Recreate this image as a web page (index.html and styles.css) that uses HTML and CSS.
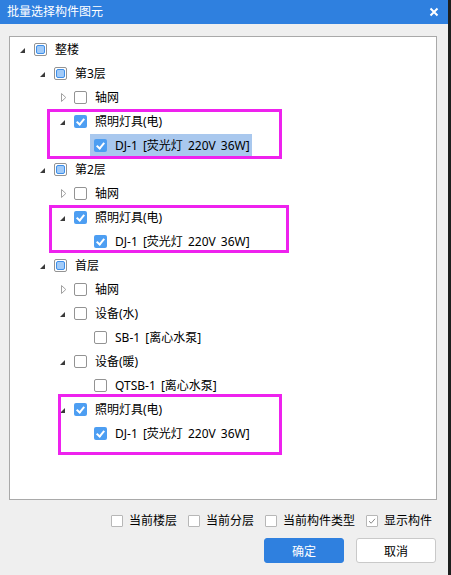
FILE: index.html
```html
<!DOCTYPE html>
<html lang="zh-CN">
<head>
<meta charset="utf-8">
<title>批量选择构件图元</title>
<link rel="stylesheet" href="styles.css">
</head>
<body>
<div class="dialog">
  <div class="titlebar">
    <span class="title">批量选择构件图元</span>
    <svg class="close" width="10" height="10" viewBox="0 0 10 10"><path d="M1.5 1.5 L8.5 8.5 M8.5 1.5 L1.5 8.5" stroke="#fff" stroke-width="2" fill="none"/></svg>
  </div>
  <div class="panel">
    <div class="row l0"><span class="tw"><i class="exp"></i></span><span class="item"><span class="cb part"></span><span class="lbl">整楼</span></span></div>
    <div class="row l1"><span class="tw"><i class="exp"></i></span><span class="item"><span class="cb part"></span><span class="lbl">第3层</span></span></div>
    <div class="row l2"><span class="tw col"><svg width="6" height="9" viewBox="0 0 6 9"><polygon points="0.5,0.5 4.8,4.5 0.5,8.5" fill="none" stroke="#a0a0a0"/></svg></span><span class="item"><span class="cb"></span><span class="lbl">轴网</span></span></div>
    <div class="row l2"><span class="tw"><i class="exp"></i></span><span class="item"><span class="cb chk"></span><span class="lbl">照明灯具(电)</span></span></div>
    <div class="row l3"><span class="tw"></span><span class="item sel"><span class="cb chk"></span><span class="lbl">DJ-1 [荧光灯 220V 36W]</span></span></div>
    <div class="row l1"><span class="tw"><i class="exp"></i></span><span class="item"><span class="cb part"></span><span class="lbl">第2层</span></span></div>
    <div class="row l2"><span class="tw col"><svg width="6" height="9" viewBox="0 0 6 9"><polygon points="0.5,0.5 4.8,4.5 0.5,8.5" fill="none" stroke="#a0a0a0"/></svg></span><span class="item"><span class="cb"></span><span class="lbl">轴网</span></span></div>
    <div class="row l2"><span class="tw"><i class="exp"></i></span><span class="item"><span class="cb chk"></span><span class="lbl">照明灯具(电)</span></span></div>
    <div class="row l3"><span class="tw"></span><span class="item"><span class="cb chk"></span><span class="lbl">DJ-1 [荧光灯 220V 36W]</span></span></div>
    <div class="row l1"><span class="tw"><i class="exp"></i></span><span class="item"><span class="cb part"></span><span class="lbl">首层</span></span></div>
    <div class="row l2"><span class="tw col"><svg width="6" height="9" viewBox="0 0 6 9"><polygon points="0.5,0.5 4.8,4.5 0.5,8.5" fill="none" stroke="#a0a0a0"/></svg></span><span class="item"><span class="cb"></span><span class="lbl">轴网</span></span></div>
    <div class="row l2"><span class="tw"><i class="exp"></i></span><span class="item"><span class="cb"></span><span class="lbl">设备(水)</span></span></div>
    <div class="row l3"><span class="tw"></span><span class="item"><span class="cb"></span><span class="lbl">SB-1 [离心水泵]</span></span></div>
    <div class="row l2"><span class="tw"><i class="exp"></i></span><span class="item"><span class="cb"></span><span class="lbl">设备(暖)</span></span></div>
    <div class="row l3"><span class="tw"></span><span class="item"><span class="cb"></span><span class="lbl">QTSB-1 [离心水泵]</span></span></div>
    <div class="row l2"><span class="tw"><i class="exp"></i></span><span class="item"><span class="cb chk"></span><span class="lbl">照明灯具(电)</span></span></div>
    <div class="row l3"><span class="tw"></span><span class="item"><span class="cb chk"></span><span class="lbl">DJ-1 [荧光灯 220V 36W]</span></span></div>

    <div class="mark m1"></div>
    <div class="mark m2"></div>
    <div class="mark m3"></div>
  </div>
  <div class="options">
    <label class="opt"><span class="ocb"></span>当前楼层</label>
    <label class="opt"><span class="ocb"></span>当前分层</label>
    <label class="opt"><span class="ocb"></span>当前构件类型</label>
    <label class="opt"><span class="ocb on"><svg width="10" height="10" viewBox="0 0 10 10"><path d="M2 5.2 L4.2 7.2 L8 2.8" stroke="#8a8a8a" stroke-width="1" fill="none"/></svg></span>显示构件</label>
  </div>
  <div class="buttons">
    <button class="btn primary">确定</button>
    <button class="btn">取消</button>
  </div>
</div>
</body>
</html>
```
FILE: styles.css
```css
html, body {
  margin: 0;
  padding: 0;
  background: #1d1f1e;
}
body {
  width: 451px;
  height: 575px;
  overflow: hidden;
  font-family: "Noto Sans", "Noto Sans CJK SC", sans-serif;
  font-size: 12px;
  color: #000;
}
.dialog {
  width: 448px;
  height: 575px;
  background: #efefef;
  display: flex;
  flex-direction: column;
}
.titlebar {
  height: 24px;
  background: #2f80df;
  display: flex;
  align-items: center;
  justify-content: space-between;
  padding: 0 9px 0 7px;
  flex: none;
}
.title {
  color: #fff;
  font-size: 12px;
  line-height: 24px;
}
.close {
  display: block;
}
.panel {
  position: relative;
  margin: 12px 11px 0 9px;
  height: 464px;
  box-sizing: border-box;
  border: 1px solid #a9a9a9;
  background: #fff;
  flex: none;
}
.row {
  height: 24px;
  display: flex;
  align-items: center;
}
.l0 { padding-left: 0; }
.l1 { padding-left: 20px; }
.l2 { padding-left: 40px; }
.l3 { padding-left: 60px; }
.tw {
  width: 20px;
  height: 24px;
  display: flex;
  align-items: center;
  box-sizing: border-box;
  padding-left: 10px;
  flex: none;
}
.tw.col {
  padding-left: 11px;
}
.tw.col svg {
  display: block;
  margin-top: 1px;
}
.exp {
  display: block;
  width: 0;
  height: 0;
  border-style: solid;
  border-width: 0 0 5px 5px;
  border-color: transparent transparent #3a3a3a transparent;
  margin-top: 3px;
}
.item {
  display: flex;
  align-items: center;
  height: 22px;
  padding: 0 2px 0 4px;
}
.item.sel {
  background: #a9c8ee;
}
.lbl {
  line-height: 20px;
  padding-top: 2px;
  white-space: nowrap;
  word-spacing: 2px;
}
.cb {
  position: relative;
  width: 13px;
  height: 13px;
  box-sizing: border-box;
  border: 1px solid #939393;
  border-radius: 2px;
  background: #fff;
  margin-right: 8px;
  flex: none;
}
.cb.part::after {
  content: "";
  position: absolute;
  left: 1px;
  top: 1px;
  right: 1px;
  bottom: 1px;
  box-sizing: border-box;
  border: 1px solid #3e8fea;
  border-radius: 2px;
  background: #a2cbf8;
}
.cb.chk {
  border: none;
  background: #4d9ef2;
}
.cb.chk::after {
  content: "";
  position: absolute;
  left: 4px;
  top: 2px;
  width: 3px;
  height: 6px;
  border: solid #fff;
  border-width: 0 2px 2px 0;
  transform: rotate(40deg);
}
.mark {
  position: absolute;
  box-sizing: border-box;
  border: 3px solid #ee22ee;
}
.m1 { left: 37px; top: 72px; width: 235px; height: 50px; }
.m2 { left: 39px; top: 168px; width: 240px; height: 48px; }
.m3 { left: 48px; top: 357px; width: 224px; height: 61px; }
.options {
  display: flex;
  justify-content: flex-end;
  align-items: center;
  gap: 11px;
  padding-right: 16px;
  margin-top: 13px;
  height: 15px;
  flex: none;
}
.opt {
  display: flex;
  align-items: center;
  line-height: 15px;
  color: #000;
  white-space: nowrap;
}
.ocb {
  width: 12px;
  height: 12px;
  box-sizing: border-box;
  border: 1px solid #b7b7b7;
  border-radius: 1px;
  background: #fff;
  margin-right: 6px;
  display: flex;
  align-items: center;
  justify-content: center;
}
.ocb svg { display: block; }
.buttons {
  display: flex;
  justify-content: flex-end;
  gap: 12px;
  padding-right: 12px;
  margin-top: 10px;
  flex: none;
}
.btn {
  width: 80px;
  height: 25px;
  box-sizing: border-box;
  border: 1px solid #c9c9c9;
  border-radius: 3px;
  background: #fff;
  font-family: "Noto Sans", "Noto Sans CJK SC", sans-serif;
  font-size: 12px;
  color: #000;
  padding: 0;
}
.btn.primary {
  background: #2f80df;
  border-color: #2f80df;
  color: #fff;
}
```
